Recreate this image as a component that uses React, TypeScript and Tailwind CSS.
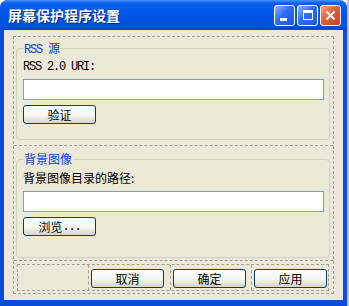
import React from 'react';

const cjk = "font-['Noto_Sans_CJK_SC','Noto_Sans_CJK_JP',sans-serif]";
const lat = "font-['Liberation_Mono',monospace] tracking-[-1.2px]";

function XpButton({ children }: { children: React.ReactNode }) {
  return (
    <button className="flex h-[19px] w-[73px] items-center justify-center rounded-[3px] border border-[#003c74] bg-[linear-gradient(to_bottom,#ffffff_0%,#f6f5f0_55%,#d8d3c6_100%)] text-[12px] leading-[14px] text-black">
      {children}
    </button>
  );
}

function GroupBox({ label, className, children }: { label: React.ReactNode; className: string; children: React.ReactNode }) {
  return (
    <div className={`relative rounded-[4px] border border-[#d0d0bf] pl-[6px] pr-[5px] ${className}`}>
      <span className="absolute left-[6px] top-[-8px] bg-[#ece9d8] px-[1px] text-[12px] leading-[14px] text-[#0046d5]">
        {label}
      </span>
      {children}
    </div>
  );
}

function TitleButton({ kind }: { kind: 'min' | 'max' | 'close' }) {
  const bg =
    kind === 'close'
      ? 'bg-[linear-gradient(135deg,#f3a08a_0%,#e2603f_45%,#c8401f_100%)]'
      : 'bg-[linear-gradient(135deg,#8fb4ff_0%,#2a6ff0_45%,#1d55d8_100%)]';
  return (
    <div className={`relative flex h-[21px] w-[21px] items-center justify-center rounded-[3px] border border-white ${bg}`}>
      {kind === 'min' && <div className="absolute left-[5px] top-[12px] h-[3px] w-[7px] bg-white" />}
      {kind === 'max' && <div className="h-[10px] w-[10px] border border-white border-t-[3px]" />}
      {kind === 'close' && (
        <svg width="11" height="11" viewBox="0 0 11 11">
          <path d="M1.5 1.5 L9.5 9.5 M9.5 1.5 L1.5 9.5" stroke="white" strokeWidth="2" />
        </svg>
      )}
    </div>
  );
}

export default function App() {
  return (
    <div className={`flex h-[306px] w-[349px] ${cjk}`}>
      <div className="flex h-full w-[347px] flex-col overflow-hidden rounded-t-[8px] bg-[#0a4bdc]">
        {/* Title bar */}
        <div className="flex h-[30px] shrink-0 items-center bg-[linear-gradient(to_bottom,#4a93f8_0%,#0a60ec_10%,#0056e6_45%,#0052e0_85%,#0043c8_100%)] pl-[8px] pr-[6px]">
          <span className="flex-1 text-[14px] font-bold leading-[16px] text-white [text-shadow:1px_1px_0_#0a1f8f]">
            屏幕保护程序设置
          </span>
          <div className="flex gap-[2px]">
            <TitleButton kind="min" />
            <TitleButton kind="max" />
            <TitleButton kind="close" />
          </div>
        </div>

        {/* Body */}
        <div className="mx-[4px] flex-1 bg-[#ece9d8] px-[9px] pt-[6px] pb-[6px] mb-[6px]">
          <div className="flex h-[258px] flex-col border border-dashed border-[#a29f92]">
            {/* Row 1 */}
            <div className="h-[109px] shrink-0 border-b border-dashed border-[#a29f92] pt-[11px] pl-[2px] pr-[3px]">
              <GroupBox
                label={
                  <>
                    <span className={lat}>RSS </span>源
                  </>
                }
                className="h-[92px] pt-[11px]"
              >
                <div className={`text-[12px] leading-[14px] text-black ${lat}`}>RSS 2.0 URI:</div>
                <div className="mt-[5px] h-[21px] w-full border border-[#7f9db9] bg-white" />
                <div className="mt-[5px]">
                  <XpButton>验证</XpButton>
                </div>
              </GroupBox>
            </div>

            {/* Row 2 */}
            <div className="h-[115px] shrink-0 border-b border-dashed border-[#a29f92] pt-[13px] pl-[2px] pr-[3px]">
              <GroupBox label="背景图像" className="h-[99px] pt-[11px]">
                <div className="text-[12px] leading-[14px] text-black">背景图像目录的路径:</div>
                <div className="mt-[6px] h-[21px] w-full border border-[#7f9db9] bg-white" />
                <div className="mt-[5px]">
                  <XpButton>
                    浏览<span className={lat}>...</span>
                  </XpButton>
                </div>
              </GroupBox>
            </div>

            {/* Row 3 */}
            <div className="flex-1 pt-[3px] pl-[3px] pr-[4px]">
              <div className="flex h-[27px] border border-dashed border-[#a29f92]">
                <div className="w-[70px]" />
                <div className="w-[82px] border-l border-dashed border-[#a29f92] pl-[2px] pt-[4px]">
                  <XpButton>取消</XpButton>
                </div>
                <div className="w-[81px] border-l border-dashed border-[#a29f92] pl-[2px] pt-[4px]">
                  <XpButton>确定</XpButton>
                </div>
                <div className="w-[77px] border-l border-dashed border-[#a29f92] pl-[2px] pt-[4px]">
                  <XpButton>应用</XpButton>
                </div>
              </div>
            </div>
          </div>
        </div>
      </div>
      <div className="h-full w-[2px] bg-[#b4c4ea]" />
    </div>
  );
}
